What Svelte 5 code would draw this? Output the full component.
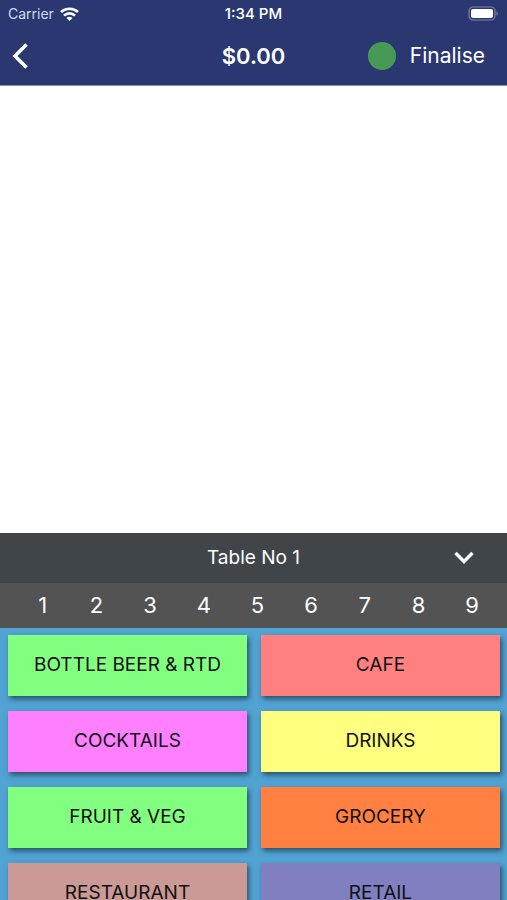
<script>
  const total = '$0.00';
  const tables = [1, 2, 3, 4, 5, 6, 7, 8, 9];
  const categories = [
    { name: 'BOTTLE BEER & RTD', tone: 'green' },
    { name: 'CAFE', tone: 'coral' },
    { name: 'COCKTAILS', tone: 'pink' },
    { name: 'DRINKS', tone: 'yellow' },
    { name: 'FRUIT & VEG', tone: 'green' },
    { name: 'GROCERY', tone: 'orange' },
    { name: 'RESTAURANT', tone: 'rose' },
    { name: 'RETAIL', tone: 'violet' }
  ];
  let selected = $state(1);
</script>

<div class="screen">
  <header>
    <div class="status">
      <div class="carrier">
        <span>Carrier</span>
        <svg width="19" height="14" viewBox="0 0 19 14" aria-hidden="true">
          <g fill="none" stroke="#fff" stroke-width="2.7">
            <path d="M1 5.1C5.8.6 13.2.6 18 5.1" />
            <path d="M4 8.6c3-2.9 8-2.9 11 0" />
          </g>
          <path d="M6.5 10.9c1.7-1.5 4.3-1.5 6 0l-3 3z" fill="#fff" />
        </svg>
      </div>
      <span class="time">1:34 PM</span>
      <div class="power">
        <svg width="31" height="15" viewBox="0 0 31 15" aria-hidden="true">
          <rect x="1" y="1" width="26" height="13" rx="4" fill="none" stroke="#7d84ae" stroke-width="1.2" />
          <rect x="3" y="3" width="22" height="9" rx="2" fill="#fff" />
          <path d="M28.5 5.2c1.6.6 1.6 4 0 4.6z" fill="#7d84ae" />
        </svg>
      </div>
    </div>
    <nav>
      <button class="back" aria-label="Back">
        <svg width="18" height="28" viewBox="0 0 18 28" aria-hidden="true">
          <path d="M15.5 2.5 4 14l11.5 11.5" fill="none" stroke="#fff" stroke-width="3.6" />
        </svg>
      </button>
      <h1>{total}</h1>
      <button class="finalise"><span class="dot"></span>Finalise</button>
    </nav>
  </header>

  <main></main>

  <button class="table-bar">
    <span></span>
    <span>Table No {selected}</span>
    <svg width="20" height="14" viewBox="0 0 20 14" aria-hidden="true">
      <path d="M1.5 2 10 10.5 18.5 2" fill="none" stroke="#fff" stroke-width="3.4" />
    </svg>
  </button>

  <div class="numbers">
    {#each tables as n}
      <button onclick={() => (selected = n)}>{n}</button>
    {/each}
  </div>

  <section class="panel">
    <div class="categories">
      {#each categories as c}
        <button class={c.tone}>{c.name}</button>
      {/each}
    </div>
  </section>
</div>

<style>
  :global(body) {
    margin: 0;
  }
  .screen {
    display: flex;
    flex-direction: column;
    height: 100vh;
    overflow: hidden;
    background: #fff;
    color: #fff;
    font-family: Inter, 'Liberation Sans', sans-serif;
  }
  button {
    margin: 0;
    padding: 0;
    border: 0;
    background: none;
    color: inherit;
    font: inherit;
    cursor: pointer;
  }
  svg {
    display: block;
  }
  header {
    flex: none;
    background: #2a3770;
    border-bottom: 1px solid #8a8fb0;
  }
  .status,
  nav {
    display: grid;
    grid-template-columns: 1fr auto 1fr;
    align-items: center;
  }
  .status {
    height: 27px;
    padding: 0 8px;
    font-size: 14px;
    line-height: 20px;
  }
  .carrier {
    display: flex;
    align-items: center;
    gap: 6px;
    color: #d4d9f0;
  }
  .time {
    font-size: 15px;
    font-weight: 500;
  }
  .power {
    justify-self: end;
  }
  nav {
    height: 58px;
  }
  .back {
    justify-self: start;
    margin-left: 11px;
  }
  h1 {
    margin: 0;
    font-size: 22px;
    line-height: 28px;
    font-weight: 600;
  }
  .finalise {
    justify-self: end;
    display: flex;
    align-items: center;
    gap: 14px;
    margin-right: 22px;
    font-size: 21px;
    line-height: 28px;
  }
  .dot {
    width: 28px;
    height: 28px;
    border-radius: 50%;
    background: #479a56;
  }
  main {
    flex: 23 1 0;
    background: #fff;
  }
  .table-bar {
    flex: none;
    display: grid;
    grid-template-columns: 1fr auto 1fr;
    align-items: center;
    height: 50px;
    padding: 0 33px;
    background: #3f4549;
    font-size: 19px;
    line-height: 24px;
  }
  .table-bar svg {
    justify-self: end;
  }
  .numbers {
    flex: none;
    display: grid;
    grid-template-columns: repeat(9, 1fr);
    height: 45px;
    padding: 0 8px 0 16px;
    background: #535353;
    font-size: 22px;
    line-height: 28px;
  }
  .panel {
    flex: 14 1 0;
    min-height: 0;
    overflow: hidden;
    background: #51a3d3;
  }
  .categories {
    display: grid;
    grid-template-columns: 1fr 1fr;
    grid-auto-rows: 61px;
    gap: 15px 14px;
    padding: 7px 7px 7px 8px;
    color: #111;
    font-size: 19px;
    line-height: 24px;
  }
  .categories button {
    box-shadow: 2px 3px 5px rgba(0, 0, 0, 0.5);
  }
  .green {
    background: #82ff80;
  }
  .coral {
    background: #ff8080;
  }
  .pink {
    background: #ff80ff;
  }
  .yellow {
    background: #ffff80;
  }
  .orange {
    background: #ff8040;
  }
  .rose {
    background: #cb9996;
  }
  .violet {
    background: #8080c0;
  }
</style>
